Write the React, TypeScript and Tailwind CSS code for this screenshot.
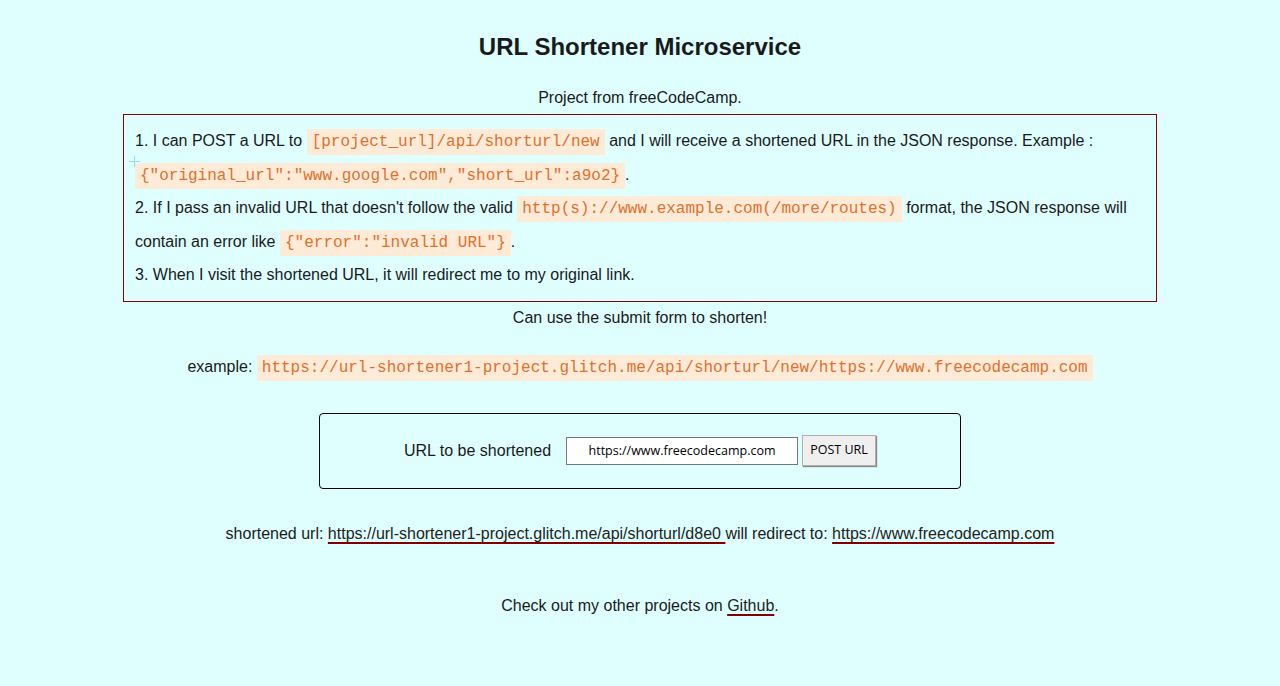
const Code = ({ children }: { children: React.ReactNode }) => (
  <code className="bg-[#fdebd7] text-[#e0702e] px-[5px] py-[4px] font-['Liberation_Mono','Courier_New',monospace] text-[16px] leading-none">
    {children}
  </code>
)

const LinkText = ({ children }: { children: React.ReactNode }) => (
  <a
    href="#"
    className="text-[#222] underline decoration-[#800000] decoration-[1.5px] underline-offset-[3px] [text-decoration-skip-ink:none]"
  >
    {children}
  </a>
)

export default function App() {
  return (
    <div className="min-h-[686px] bg-[#dfffff] text-[#1a1a1a] font-['Liberation_Sans',Arial,sans-serif] text-[16px] text-center pt-[31px]">
      <h1 className="text-[24px] font-bold leading-[32px]">URL Shortener Microservice</h1>

      <p className="mt-[26px] leading-[18px]">Project from freeCodeCamp.</p>

      <div className="relative w-[1034px] mx-auto mt-[7px] border border-[#8b0000] text-left px-[11px] pt-[9px] pb-[9px] leading-[33.5px]">
        <span className="absolute left-[5px] top-[41px] w-[11px] h-[11px] pointer-events-none">
          <span className="absolute left-[5px] top-0 w-[1px] h-[11px] bg-[#9fd6ef]" />
          <span className="absolute left-0 top-[5px] w-[11px] h-[1px] bg-[#9fd6ef]" />
        </span>
        1. I can POST a URL to <Code>[project_url]/api/shorturl/new</Code> and I will receive a shortened URL in
        the JSON response. Example : <Code>{'{"original_url":"www.google.com","short_url":a9o2}'}</Code>.
        <br />
        2. If I pass an invalid URL that doesn't follow the valid <Code>http(s)://www.example.com(/more/routes)</Code>{' '}
        format, the JSON response will contain an error like <Code>{'{"error":"invalid URL"}'}</Code>.
        <br />
        3. When I visit the shortened URL, it will redirect me to my original link.
      </div>

      <p className="mt-[6px] leading-[20px]">Can use the submit form to shorten!</p>

      <p className="mt-[29px] leading-[20px]">
        example: <Code>https://url-shortener1-project.glitch.me/api/shorturl/new/https://www.freecodecamp.com</Code>
      </p>

      <form
        className="w-[642px] h-[76px] mx-auto mt-[36px] border border-black rounded-[4px] flex items-center justify-center"
        onSubmit={(e) => e.preventDefault()}
      >
        <label className="mr-[15px]">URL to be shortened</label>
        <input
          readOnly
          value="https://www.freecodecamp.com"
          className="w-[232px] h-[28px] bg-white border border-[#767676] text-center text-[12.5px] font-['Open_Sans',sans-serif] text-black"
        />
        <button
          type="button"
          className="ml-[4px] h-[31px] w-[74px] bg-[#efefef] border border-[#b0b0b0] shadow-[1px_1px_1px_#888] text-[12.5px] font-['Open_Sans',sans-serif] text-black"
        >
          POST URL
        </button>
      </form>

      <p className="mt-[35px] leading-[20px]">
        shortened url: <LinkText>https://url-shortener1-project.glitch.me/api/shorturl/d8e0 </LinkText>will redirect to:{' '}
        <LinkText>https://www.freecodecamp.com</LinkText>
      </p>

      <p className="mt-[52px] leading-[20px]">
        Check out my other projects on <LinkText>Github</LinkText>.
      </p>
    </div>
  )
}
